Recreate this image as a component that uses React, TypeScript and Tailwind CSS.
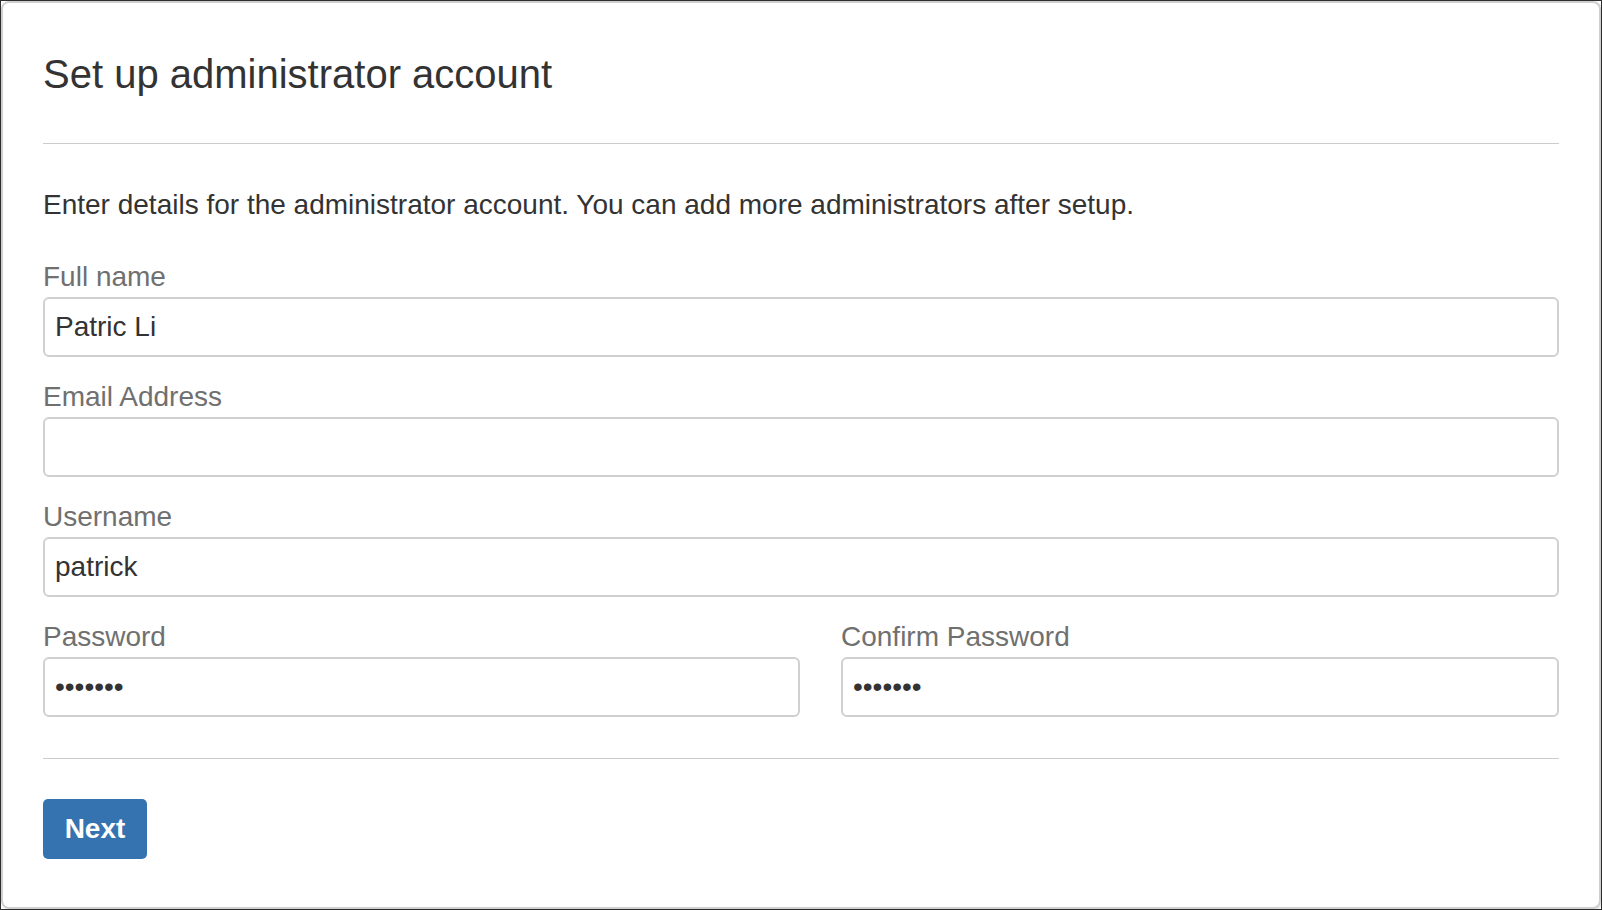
const inputCls =
  "block h-[60px] w-full rounded-[6px] border-2 border-[#d0d0d0] bg-white px-[10px] text-[28px] text-[#333333] outline-none";
const labelCls = "block h-[40px] text-[28px] leading-[40px] text-[#707070]";

function Field({ label, value = "" }: { label: string; value?: string }) {
  return (
    <div className="mb-[20px]">
      <label className={labelCls}>{label}</label>
      <input className={inputCls} readOnly value={value} />
    </div>
  );
}

export default function App() {
  return (
    <div className="h-[910px] w-[1602px] border border-[#2e2e2e] bg-white font-['Liberation_Sans',Arial,sans-serif] text-[#333333]">
      <div className="flex h-full flex-col rounded-[8px] border-2 border-[#cfcfcf] px-[40px] shadow-[1px_1px_2px_rgba(0,0,0,0.12)]">
        <h1 className="mt-[49px] text-[40px] leading-[44px] font-normal">Set up administrator account</h1>
        <hr className="mt-[47px] border-0 border-t border-[#cccccc]" />

        <p className="mt-[41px] text-[28px] leading-[40px]">
          Enter details for the administrator account. You can add more administrators after setup.
        </p>

        <form className="mt-[32px]" onSubmit={(e) => e.preventDefault()}>
          <Field label="Full name" value="Patric Li" />
          <Field label="Email Address" />
          <Field label="Username" value="patrick" />

          <div className="flex gap-[41px]">
            <div className="w-[757px]">
              <label className={labelCls}>Password</label>
              <input className={inputCls} readOnly value="•••••••" />
            </div>
            <div className="flex-1">
              <label className={labelCls}>Confirm Password</label>
              <input className={inputCls} readOnly value="•••••••" />
            </div>
          </div>

          <hr className="mt-[41px] border-0 border-t border-[#cccccc]" />

          <button
            type="submit"
            className="mt-[40px] h-[60px] w-[104px] rounded-[5px] bg-[#3572b0] text-[28px] font-bold text-white"
          >
            Next
          </button>
        </form>
      </div>
    </div>
  );
}
